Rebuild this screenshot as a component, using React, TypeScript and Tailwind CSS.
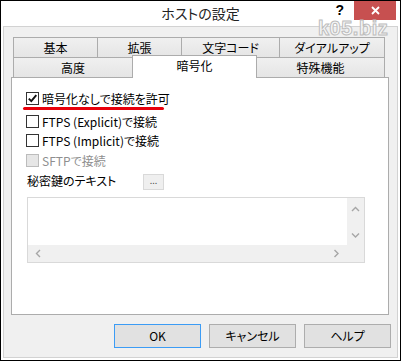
import clsx from "clsx";

function Check({ checked, disabled }: { checked?: boolean; disabled?: boolean }) {
  return (
    <span
      className={clsx(
        "w-[13px] h-[13px] border flex items-center justify-center shrink-0",
        disabled ? "border-[#bcbcbc] bg-[#e6e6e6]" : "border-[#333333] bg-white"
      )}
    >
      {checked && (
        <svg width="11" height="11" viewBox="0 0 11 11">
          <path d="M1.8 5.6 L4.3 8.2 L9.3 2.2" fill="none" stroke="#111" strokeWidth="1.9" />
        </svg>
      )}
    </span>
  );
}

function Row({ label, checked, disabled, className }: { label: string; checked?: boolean; disabled?: boolean; className?: string }) {
  return (
    <div className={clsx("flex items-center gap-[3px] h-[13px]", className)}>
      <Check checked={checked} disabled={disabled} />
      <span className={clsx("text-[12px] leading-[13px]", disabled ? "text-[#8f8f8f]" : "text-black")}>{label}</span>
    </div>
  );
}

function Chevron({ dir }: { dir: "up" | "down" | "left" | "right" }) {
  const d = {
    up: "M1 5 L4.5 1.5 L8 5",
    down: "M1 1.5 L4.5 5 L8 1.5",
    left: "M5 1 L1.5 4.5 L5 8",
    right: "M1.5 1 L5 4.5 L1.5 8",
  }[dir];
  const vertical = dir === "up" || dir === "down";
  return (
    <svg width={vertical ? 9 : 7} height={vertical ? 7 : 9} viewBox={vertical ? "0 0 9 7" : "0 0 7 9"}>
      <path d={d} fill="none" stroke="#a6a6a6" strokeWidth="1.4" />
    </svg>
  );
}

function Tab({ label, className }: { label: string; className?: string }) {
  return (
    <div
      className={clsx(
        "flex items-center justify-center border border-[#acacac] bg-gradient-to-b from-[#f0f0f0] to-[#e5e5e5] text-[12px] text-black",
        className
      )}
    >
      {label}
    </div>
  );
}

export default function App() {
  return (
    <div className="w-[401px] h-[361px] border border-black bg-white relative overflow-hidden font-['Noto_Sans_CJK_JP',sans-serif] [font-feature-settings:'palt'] text-black">
      {/* title bar */}
      <div className="h-[25px] grid grid-cols-[1fr_auto_1fr]">
        <div />
        <div className="text-[14px] leading-[25px] text-[#222]">ホストの設定</div>
        <div className="flex justify-end items-start">
          <span className="text-[14px] leading-[16px] font-bold mt-[1px] mr-[10px] font-['Liberation_Sans',sans-serif]">?</span>
          <div className="w-[42px] h-[19px] bg-[#c75050] flex items-center justify-center mr-[4px]">
            <svg width="9" height="9" viewBox="0 0 9 9">
              <path d="M1 1 L8 8 M8 1 L1 8" stroke="white" strokeWidth="1.8" />
            </svg>
          </div>
        </div>
      </div>

      {/* watermark */}
      <div className="absolute left-[317px] top-[12px] text-[20px] font-bold font-['Liberation_Sans',sans-serif] text-[#f7f7f7] [-webkit-text-stroke:1px_#bdbdbd] tracking-[0.5px] z-20">
        k05.biz
      </div>

      {/* client area */}
      <div className="mx-[2px] h-[332px] border border-[#d2d2d2] bg-[#f0f0f0] pt-[10px]">
        {/* tabs */}
        <div className="pl-[9px]">
          <div className="flex h-[21px]">
            <Tab label="基本" className="w-[85px]" />
            <Tab label="拡張" className="w-[85px] -ml-px" />
            <Tab label="文字コード" className="w-[99px] -ml-px" />
            <Tab label="ダイアルアップ" className="w-[106px] -ml-px" />
          </div>
          <div className="flex items-end h-[20px] -mt-px">
            <Tab label="高度" className="w-[120px] h-[20px] border-b-0" />
            <div className="w-[125px] h-[23px] -ml-px mb-[-1px] border border-b-0 border-[#acacac] bg-white relative z-10 flex items-center justify-center text-[12px] pb-[2px]">
              暗号化
            </div>
            <Tab label="特殊機能" className="w-[129px] h-[20px] -ml-px border-b-0" />
          </div>
        </div>

        {/* panel */}
        <div className="ml-[7px] w-[378px] h-[238px] border border-[#acacac] bg-white pt-[14px] pl-[14px]">
          <Row label="暗号化なしで接続を許可" checked />
          <div className="mt-[2px] -ml-[3px] w-[141px] h-[3px] bg-[#e8000b] rounded-full" />
          <Row label="FTPS (Explicit)で接続" className="mt-[5px]" />
          <Row label="FTPS (Implicit)で接続" className="mt-[6px]" />
          <Row label="SFTPで接続" disabled className="mt-[7px]" />

          <div className="flex items-start mt-[7px] pl-[1px]">
            <span className="w-[116px] text-[12px] leading-[14px]">秘密鍵のテキスト</span>
            <div className="w-[21px] h-[16px] border border-[#d9d9d9] bg-[#efefef] flex items-center justify-center text-[9px] leading-none text-[#555] pb-[3px]">
              ...
            </div>
          </div>

          <div className="mt-[7px] ml-[1px] w-[338px] h-[66px] border border-[#d9d9d9] flex flex-col">
            <div className="flex flex-1">
              <div className="flex-1 bg-white" />
              <div className="w-[17px] bg-[#f0f0f0] flex flex-col items-center justify-between pt-[8px] pb-[6px]">
                <Chevron dir="up" />
                <Chevron dir="down" />
              </div>
            </div>
            <div className="flex h-[17px]">
              <div className="flex-1 bg-[#f0f0f0] flex items-center justify-between pl-[7px] pr-[7px]">
                <Chevron dir="left" />
                <Chevron dir="right" />
              </div>
              <div className="w-[17px] bg-[#f0f0f0]" />
            </div>
          </div>
        </div>

        {/* buttons */}
        <div className="flex gap-[8px] pl-[110px] mt-[9px]">
          <button className="w-[87px] h-[24px] border border-[#3c9cf5] bg-[#e1e1e1] text-[12px]">OK</button>
          <button className="w-[87px] h-[24px] border border-[#adadad] bg-[#e1e1e1] text-[12px]">キャンセル</button>
          <button className="w-[87px] h-[24px] border border-[#adadad] bg-[#e1e1e1] text-[12px]">ヘルプ</button>
        </div>
      </div>
    </div>
  );
}
